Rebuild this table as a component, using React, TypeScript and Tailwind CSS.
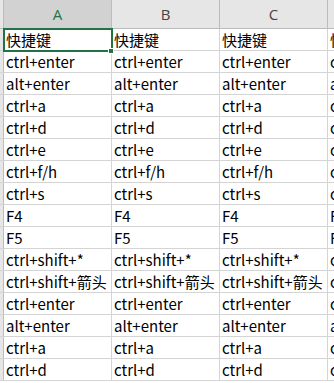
import React from "react";

const rows = [
  "快捷键",
  "ctrl+enter",
  "alt+enter",
  "ctrl+a",
  "ctrl+d",
  "ctrl+e",
  "ctrl+f/h",
  "ctrl+s",
  "F4",
  "F5",
  "ctrl+shift+*",
  "ctrl+shift+箭头",
  "ctrl+enter",
  "alt+enter",
  "ctrl+a",
  "ctrl+d",
];

const font = { fontFamily: '"Noto Sans CJK SC", "Noto Sans", sans-serif' };

export default function App() {
  return (
    <div className="relative w-[334px] h-[383px] overflow-hidden bg-white" style={font}>
      {/* header */}
      <div className="flex h-[29px] bg-[#e6e6e6] border-b border-[#bcbcbc]">
        <div className="w-[4px] shrink-0 border-r border-[#bcbcbc]" />
        <div className="w-[108px] shrink-0 bg-[#d2d2d2] border-r border-[#bcbcbc] flex items-center justify-center text-[15px] text-[#217346]" style={{ fontFamily: '"Open Sans", sans-serif' }}>A</div>
        <div className="w-[108px] shrink-0 border-r border-[#bcbcbc] flex items-center justify-center text-[15px] text-[#444]" style={{ fontFamily: '"Open Sans", sans-serif' }}>B</div>
        <div className="w-[108px] shrink-0 border-r border-[#bcbcbc] flex items-center justify-center text-[15px] text-[#444]" style={{ fontFamily: '"Open Sans", sans-serif' }}>C</div>
        <div className="flex-1" />
      </div>
      {rows.map((t, i) => (
        <div key={i} className="flex h-[22px] border-b border-[#d4d4d4]">
          <div className="w-[4px] shrink-0 bg-[#e6e6e6] border-r border-[#bcbcbc]" />
          {[0, 1, 2].map((c) => (
            <div key={c} className="w-[108px] shrink-0 border-r border-[#d4d4d4] pl-[2px] flex items-center text-[15px] leading-none text-black whitespace-nowrap overflow-hidden">
              {t}
            </div>
          ))}
          <div className="flex-1 pl-[2px] flex items-center text-[15px] leading-none text-black whitespace-nowrap overflow-hidden">{t}</div>
        </div>
      ))}
      {/* selection */}
      <div className="absolute left-[3px] top-[28px] w-[110px] h-[24px] border-2 border-[#217346]" />
      <div className="absolute left-[108px] top-[48px] w-[6px] h-[6px] bg-[#217346] border border-white" />
    </div>
  );
}
